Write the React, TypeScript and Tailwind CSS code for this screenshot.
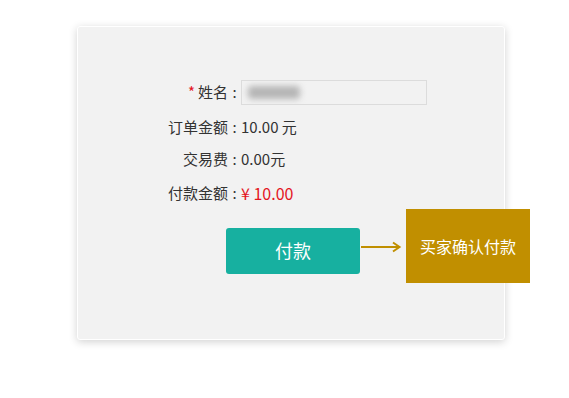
export default function App() {
  const font = "font-['Noto_Sans_CJK_SC','Noto_Sans',sans-serif]";
  return (
    <div className={`w-[569px] h-[398px] bg-white overflow-hidden ${font}`}>
      <div className="ml-[77px] mt-[26px] w-[428px] h-[314px] bg-[#f2f2f2] border border-white rounded-[3px] shadow-[0_2px_9px_rgba(0,0,0,0.18)] flex flex-col items-start">
        {/* Form */}
        <div className="mt-[52px] flex items-center h-[26px]">
          <div className="w-[150px] text-right text-[15px] text-[#333]">
            <span className="text-[#e4151f] mr-[3px]">*</span>姓名
          </div>
          <div className="w-[13px] text-center text-[15px] text-[#333]">:</div>
          <div className="w-[186px] h-[25px] border border-[#dcdcdc] bg-[#f2f2f2] flex items-center pl-[6px] overflow-hidden">
            <div className="w-[52px] h-[13px] bg-[#b5b5b5] blur-[3px] rounded-sm" />
          </div>
        </div>
        <Row label="订单金额" top="mt-[9px]">
          <span className="text-[15px] text-[#333]">10.00 元</span>
        </Row>
        <Row label="交易费" top="mt-[6px]">
          <span className="text-[15px] text-[#333]">0.00元</span>
        </Row>
        <Row label="付款金额" top="mt-[8px]">
          <span className="text-[16px] text-[#e4151f]">¥ 10.00</span>
        </Row>

        {/* Action */}
        <div className="mt-[3px] ml-[148px] flex items-center w-max shrink-0">
          <button className="w-[134px] h-[46px] mt-[9px] shrink-0 rounded-[3px] bg-[#17b0a0] text-white text-[18px]">
            付款
          </button>
          <svg width="45" height="12" viewBox="0 0 45 12" className="ml-[1px] mt-[2px] shrink-0">
            <path d="M0 6 H38" stroke="#c08f00" strokeWidth="2" />
            <path d="M32 1.5 L38.5 6 L32 10.5" stroke="#c08f00" strokeWidth="2" fill="none" />
          </svg>
          <div className="w-[124px] h-[74px] bg-[#c18f00] text-white text-[16px] flex items-center justify-center shrink-0">
            买家确认付款
          </div>
        </div>
      </div>
    </div>
  );
}

function Row({ label, top, children }: { label: string; top: string; children: React.ReactNode }) {
  return (
    <div className={`${top} flex items-center h-[26px]`}>
      <div className="w-[150px] text-right text-[15px] text-[#333]">{label}</div>
      <div className="w-[13px] text-center text-[15px] text-[#333]">:</div>
      {children}
    </div>
  );
}
